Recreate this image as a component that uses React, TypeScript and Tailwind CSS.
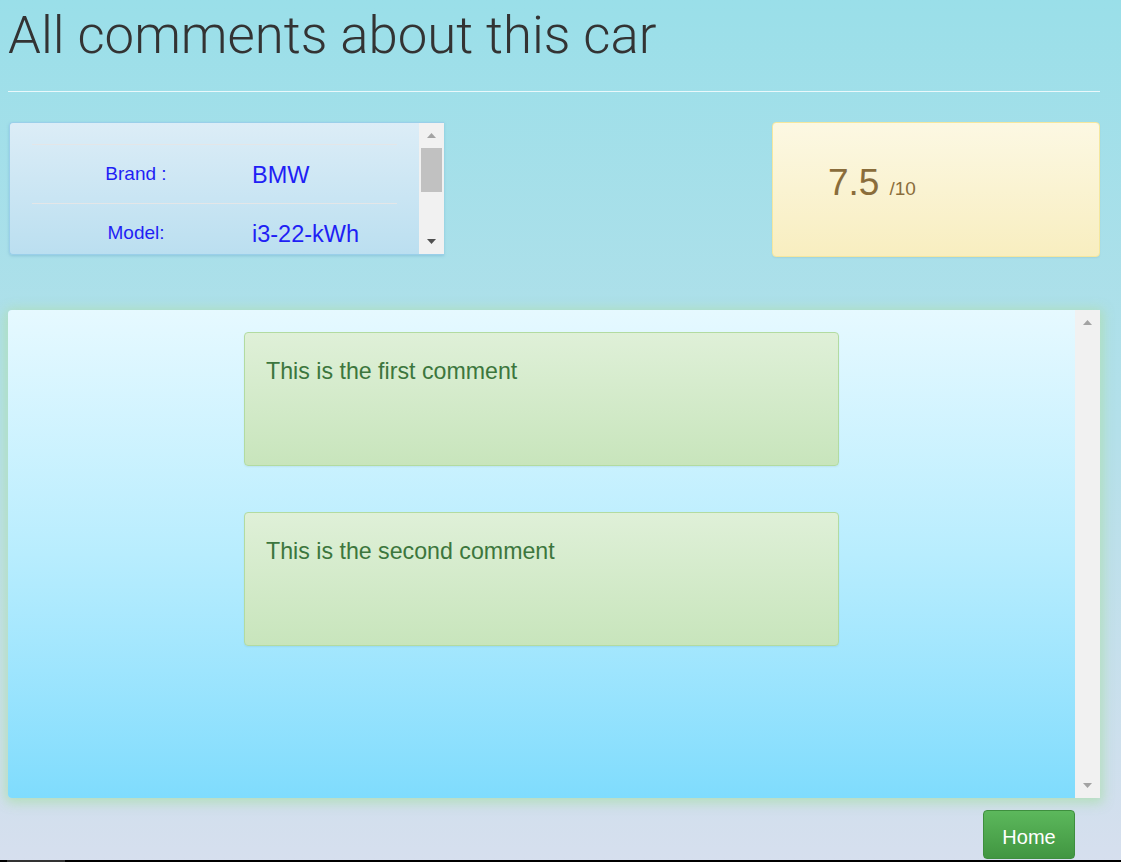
import React from "react"

const font = { fontFamily: '"Liberation Sans", Arial, sans-serif' }

function ArrowUp({ color }: { color: string }) {
  return (
    <svg width="9" height="5" viewBox="0 0 9 5">
      <polygon points="4.5,0 9,5 0,5" fill={color} />
    </svg>
  )
}

function ArrowDown({ color }: { color: string }) {
  return (
    <svg width="9" height="5" viewBox="0 0 9 5">
      <polygon points="0,0 9,0 4.5,5" fill={color} />
    </svg>
  )
}

function CarInfo() {
  const rows = [
    { label: "Brand :", value: "BMW" },
    { label: "Model:", value: "i3-22-kWh" },
  ]
  return (
    <div className="ml-px flex h-[133px] w-[435px] overflow-hidden rounded-l border border-r-0 border-[#9acfea] bg-gradient-to-b from-[#dcedf7] to-[#bbdff0] shadow-[0_1px_3px_rgba(80,150,190,0.35)]">
      <div className="flex-1 overflow-hidden px-[22px] pt-[21px]">
        {rows.map((r) => (
          <div key={r.label} className="flex h-[59px] items-center border-t border-[#e4e6e8] text-[#1f1ff5]">
            <div className="w-[208px] text-center text-[19px]">{r.label}</div>
            <div className="pl-3 pt-[3px] text-[23.5px]">{r.value}</div>
          </div>
        ))}
      </div>
      <div className="flex w-[25px] flex-col items-center bg-[#f1f1f1] pt-[10px] pb-[10px]">
        <ArrowUp color="#a3a3a3" />
        <div className="mt-[10px] h-[44px] w-[21px] bg-[#c1c1c1]" />
        <div className="flex-1" />
        <ArrowDown color="#505050" />
      </div>
    </div>
  )
}

function Score() {
  return (
    <div className="flex h-[135px] w-[328px] items-start rounded border border-[#f5e79e] bg-gradient-to-b from-[#fcf8e3] to-[#f8eec0] pl-[55px] pt-[38px] text-[#8a6d3b] shadow-[0_1px_2px_rgba(0,0,0,0.06)]">
      <span className="text-[37px] leading-[44px]">7.5</span>
      <span className="ml-[10px] mt-[14px] text-[19px] leading-[28px]">/10</span>
    </div>
  )
}

function Comment({ text }: { text: string }) {
  return (
    <div className="h-[134px] w-[595px] rounded border border-[#b2dba1] bg-gradient-to-b from-[#dff0d8] to-[#c8e5bc] px-[21px] pt-[23px] text-[23.2px] leading-[30px] text-[#3c763d] shadow-[0_1px_2px_rgba(0,0,0,0.06)]">
      {text}
    </div>
  )
}

export default function App() {
  return (
    <div
      className="flex h-[862px] w-full flex-col overflow-hidden bg-gradient-to-b from-[#9adfe9] via-[#b4e0ea] to-[#d6dfee]"
      style={font}
    >
      <div className="pl-2 pr-[21px]">
        <h1
          className="pt-[4px] text-[52.7px] font-light leading-[62px] text-[#333]"
          style={{ fontFamily: 'Roboto, "Liberation Sans", sans-serif' }}
        >
          All comments about this car
        </h1>
        <hr className="mt-[25px] border-t border-[#eaf8fb]" />

        <div className="mt-[30px] flex items-start justify-between">
          <CarInfo />
          <Score />
        </div>

        <div className="mt-[53px] flex h-[488px] overflow-hidden rounded-l bg-gradient-to-b from-[#e6f9ff] via-[#b8edfe] to-[#7fdcfd] shadow-[0_2px_12px_3px_rgba(175,222,180,0.85)]">
          <div className="flex flex-1 flex-col items-center gap-[46px] pt-[22px]">
            <Comment text="This is the first comment" />
            <Comment text="This is the second comment" />
          </div>
          <div className="flex w-[25px] flex-col items-center bg-[#f1f1f1] pb-[10px] pt-[10px]">
            <ArrowUp color="#a3a3a3" />
            <div className="flex-1" />
            <ArrowDown color="#a3a3a3" />
          </div>
        </div>

        <div className="mt-3 flex justify-end pr-[25px]">
          <button className="h-[49px] w-[92px] rounded border border-[#3e8f3e] bg-gradient-to-b from-[#5cb85c] to-[#419641] pt-[4px] text-[20px] text-white">
            Home
          </button>
        </div>
      </div>

      <div className="mt-auto flex h-[2px] bg-black">
        <div className="ml-[7px] w-[58px] bg-[#333]" />
      </div>
    </div>
  )
}
